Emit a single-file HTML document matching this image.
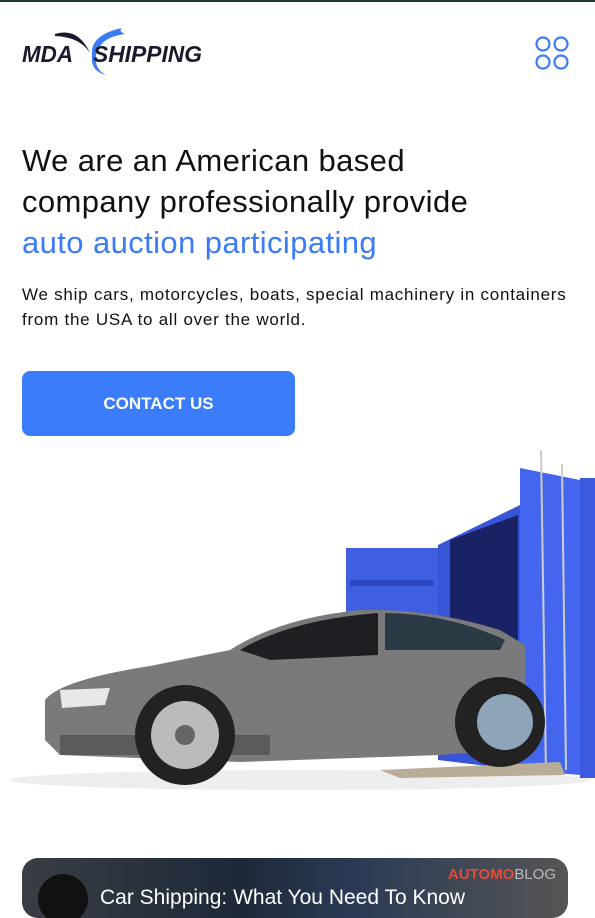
<!DOCTYPE html>
<html><head><meta charset="utf-8"><style>
*{margin:0;padding:0;box-sizing:border-box}
body{width:595px;height:891px;overflow:hidden;background:#fff;font-family:"Liberation Sans",sans-serif;position:relative}
.top{position:absolute;left:0;top:0;width:595px;height:2px;background:#1d3b33}
h1{position:absolute;left:22px;top:140px;font-size:31px;font-weight:400;line-height:41px;color:#111;letter-spacing:0.4px}
h1 span{color:#3b7bf6}
p{position:absolute;left:22px;top:282px;font-size:17px;line-height:25px;color:#111;letter-spacing:0.75px;white-space:nowrap}
.btn{position:absolute;left:22px;top:371px;width:273px;height:65px;background:#3a7cfa;border-radius:8px;color:#fff;font-weight:700;font-size:17px;text-align:center;line-height:65px}
.card{position:absolute;left:22px;top:858px;width:546px;height:60px;border-radius:16px;background:linear-gradient(90deg,#3a3d44,#1e2838 40%,#2a3a55 60%,#555 100%);overflow:hidden}
</style></head><body>
<div class="top"></div>
<svg style="position:absolute;left:20px;top:25px" width="185" height="52" viewBox="0 0 185 52">
<path d="M35 9 Q58 2 70 28 Q60 12 35 11Z" fill="#1a1a2e"/>
<path d="M72 30 Q70 10 102 3 Q98 6 105 9 Q80 12 76 30 Q74 44 86 50 Q70 46 72 30Z" fill="#3b7bf6"/>
<text x="2" y="37" font-family="Liberation Sans" font-weight="700" font-style="italic" font-size="23" fill="#1a1a2e" textLength="51" lengthAdjust="spacingAndGlyphs">MDA</text>
<text x="73" y="37" font-family="Liberation Sans" font-weight="700" font-style="italic" font-size="23" fill="#1a1a2e" textLength="109" lengthAdjust="spacingAndGlyphs">SHIPPING</text>
</svg>
<svg style="position:absolute;left:534px;top:35px" width="36" height="36"><g fill="none" stroke="#3b7bf6" stroke-width="2.2"><circle cx="9" cy="9" r="6.5"/><circle cx="27" cy="9" r="6.5"/><circle cx="9" cy="27" r="6.5"/><circle cx="27" cy="27" r="6.5"/></g></svg>
<h1>We are an American based<br>company professionally provide<br><span>auto auction participating</span></h1>
<p>We ship cars, motorcycles, boats, special machinery in containers<br>from the USA to all over the world.</p>
<div class="btn">CONTACT US</div>
<svg style="position:absolute;left:0;top:440px" width="595" height="360" viewBox="0 440 595 360">
<ellipse cx="300" cy="780" rx="290" ry="10" fill="#eee"/>
<rect x="346" y="548" width="92" height="92" fill="#3f5fe0"/>
<rect x="350" y="580" width="84" height="6" fill="#2d48c0"/>
<path d="M438 545 L520 505 L520 770 L438 760Z" fill="#3855d8"/>
<path d="M450 540 L518 515 L518 700 L450 700Z" fill="#1a2266"/>
<path d="M520 468 L580 480 L580 775 L520 770Z" fill="#4466ee"/>
<rect x="580" y="478" width="15" height="300" fill="#3b5ae0"/>
<line x1="541" y1="450" x2="546" y2="775" stroke="#ccc" stroke-width="2"/>
<line x1="562" y1="464" x2="566" y2="770" stroke="#ccc" stroke-width="2"/>
<path d="M380 770 L560 762 L565 775 L400 778Z" fill="#b9ad98"/>
<path d="M45 700 Q60 680 150 666 L230 650 Q280 618 360 610 Q430 608 500 630 L525 645 L525 748 L440 755 L240 762 L60 755 L45 740Z" fill="#7a7a7c"/>
<path d="M240 650 Q290 620 378 613 L378 655 L270 660Z" fill="#1d1f22"/>
<path d="M385 613 Q450 614 505 640 L500 650 L385 650Z" fill="#2a3a44"/>
<path d="M60 690 L110 688 L105 705 L62 708Z" fill="#e8e8e8"/>
<rect x="60" y="735" width="210" height="20" fill="#5b5b5d"/>
<circle cx="185" cy="735" r="50" fill="#222"/><circle cx="185" cy="735" r="34" fill="#bbb"/><circle cx="185" cy="735" r="10" fill="#666"/>
<circle cx="500" cy="722" r="45" fill="#222"/><circle cx="505" cy="722" r="28" fill="#8ea4b8"/>
</svg>
<div class="card">
<div style="position:absolute;left:16px;top:16px;width:50px;height:50px;border-radius:50%;background:#111"></div>
<div style="position:absolute;right:12px;top:8px;color:#e24a3a;font-size:15px;font-weight:700">AUTOMO<span style="color:#bbb;font-weight:400">BLOG</span></div>
<div style="position:absolute;left:78px;top:28px;color:#fff;font-size:21px">Car Shipping: What You Need To Know</div>
</div>
</body></html>
